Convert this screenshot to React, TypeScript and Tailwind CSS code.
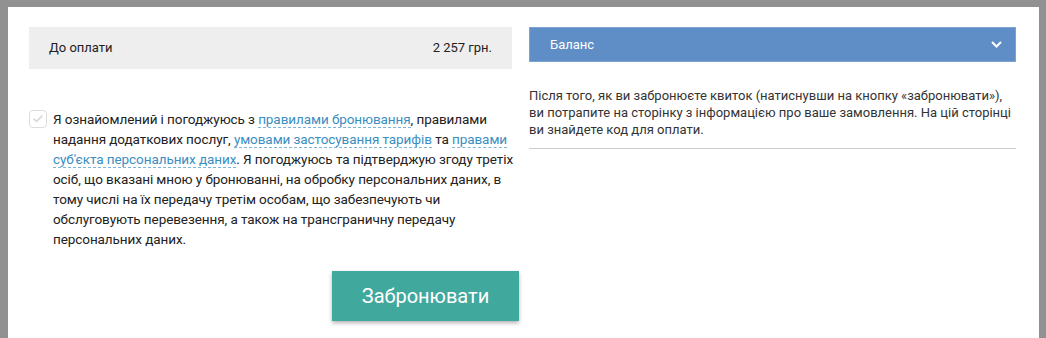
import { Check } from 'lucide-react';

const linkCls = 'text-[#3b8ec2] border-b border-dashed border-[#7fb4d6]';

const App = () => {
    return (
        <div className="min-h-[338px] bg-[#919191] pt-[7px] pl-[8px] pr-[7px] font-['Roboto','Liberation_Sans',sans-serif]">
            <div className="flex h-[331px] gap-[17px] bg-white pl-[21px] pr-[23px] pt-[20px]">
                {/* left column */}
                <div className="flex w-[483px] shrink-0 flex-col">
                    <div className="flex h-[42px] items-center justify-between bg-[#eeeeee] px-[20px] text-[13px] text-[#222]">
                        <span>До оплати</span>
                        <span>2 257 грн.</span>
                    </div>
                    <div className="mt-[40px] flex gap-[6px]">
                        <div className="mt-[1px] flex h-[18px] w-[18px] shrink-0 items-center justify-center rounded-[4px] border border-[#dddddd] bg-white">
                            <Check className="h-[12px] w-[12px] text-[#d4d4d4]" strokeWidth={3} />
                        </div>
                        <p className="w-[462px] shrink-0 text-[13.5px] leading-[20px] tracking-[-0.08px] text-[#222]">
                            Я ознайомлений і погоджуюсь з <span className={linkCls}>правилами бронювання</span>, правилами
                            надання додаткових послуг, <span className={linkCls}>умовами застосування тарифів</span> та{' '}
                            <span className={linkCls}>правами</span> <span className={linkCls}>суб'єкта персональних даних</span>.
                            Я погоджуюсь та підтверджую згоду третіх осіб, що вказані мною у бронюванні, на обробку персональних
                            даних, в тому числі на їх передачу третім особам, що забезпечують чи обслуговують перевезення, а також
                            на трансграничну передачу персональних даних.
                        </p>
                    </div>
                    <div className="mt-[22px] flex justify-end">
                        <button
                            type="button"
                            className="mr-[-7px] h-[50px] w-[187px] bg-[#41a89e] text-[20px] text-white shadow-[0_2px_4px_rgba(0,0,0,0.3)]"
                        >
                            Забронювати
                        </button>
                    </div>
                </div>

                {/* right column */}
                <div className="flex flex-1 flex-col">
                    <div className="flex h-[35px] items-center justify-between border border-[#7da2cf] bg-[#5f8ec6] pl-[20px] pr-[13px] text-[13px] text-white">
                        <span>Баланс</span>
                        <svg width="11" height="7" viewBox="0 0 11 7" fill="none">
                            <path d="M1 1l4.5 4.5L10 1" stroke="white" strokeWidth="2" />
                        </svg>
                    </div>
                    <p className="mt-[25px] text-[13px] leading-[17px] text-[#333]">
                        Після того, як ви забронюєте квиток (натиснувши на кнопку «забронювати»), ви потрапите на сторінку з
                        інформацією про ваше замовлення. На цій сторінці ви знайдете код для оплати.
                    </p>
                    <div className="mt-[10px] border-t border-[#cccccc]" />
                </div>
            </div>
        </div>
    );
};

export default App;
